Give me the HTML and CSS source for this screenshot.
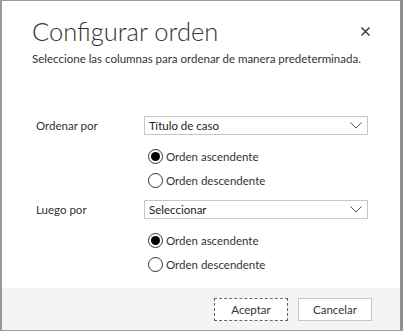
FILE: index.html
```html
<!DOCTYPE html>
<html lang="es">
<head>
<meta charset="utf-8">
<link rel="stylesheet" href="styles.css">
</head>
<body>
<div class="dialog">
  <div class="header">
    <div class="title-row">
      <h1 class="title">Configurar orden</h1>
      <svg class="close" width="9" height="9" viewBox="0 0 9 9"><path d="M0.5 0.5 L8.5 8.5 M8.5 0.5 L0.5 8.5" stroke="#333" stroke-width="1.4" fill="none"/></svg>
    </div>
    <p class="subtitle">Seleccione las columnas para ordenar de manera predeterminada.</p>
  </div>
  <div class="body">
    <div class="group">
      <div class="row">
        <span class="label">Ordenar por</span>
        <div class="select"><span>Título de caso</span>
          <svg class="chev" width="12" height="7" viewBox="0 0 12 7"><path d="M0.5 0.5 L6 6 L11.5 0.5" fill="none" stroke="#555" stroke-width="1"/></svg>
        </div>
      </div>
      <div class="radios">
        <div class="radio"><span class="circle on"></span>Orden ascendente</div>
        <div class="radio"><span class="circle"></span>Orden descendente</div>
      </div>
    </div>
    <div class="group">
      <div class="row">
        <span class="label">Luego por</span>
        <div class="select"><span>Seleccionar</span>
          <svg class="chev" width="12" height="7" viewBox="0 0 12 7"><path d="M0.5 0.5 L6 6 L11.5 0.5" fill="none" stroke="#555" stroke-width="1"/></svg>
        </div>
      </div>
      <div class="radios">
        <div class="radio"><span class="circle on"></span>Orden ascendente</div>
        <div class="radio"><span class="circle"></span>Orden descendente</div>
      </div>
    </div>
  </div>
  <div class="footer">
    <button class="btn primary">Aceptar</button>
    <button class="btn">Cancelar</button>
  </div>
</div>
</body>
</html>
```
FILE: styles.css
```css
html, body {
  margin: 0;
  padding: 0;
  background: #fff;
}
.dialog {
  box-sizing: border-box;
  width: 403px;
  height: 331px;
  border: 1px solid #9a9a9a;
  border-left-width: 2px;
  border-right: 3px solid #8e8e8e;
  display: flex;
  flex-direction: column;
  font-family: "Lato", "Noto Sans", sans-serif;
  color: #333;
  font-size: 11.5px;
}
.header {
  padding: 13px 0 0 30px;
}
.title-row {
  display: flex;
  align-items: center;
  justify-content: space-between;
  padding-right: 30px;
}
.title {
  margin: 0;
  font-family: "Lato", sans-serif;
  font-weight: 300;
  font-size: 25.5px;
  line-height: 34px;
  color: #333;
}
.close {
  display: block;
  margin-top: 1px;
}
.subtitle {
  margin: 3px 0 0;
  font-size: 11.5px;
  line-height: 16px;
  color: #333;
}
.body {
  flex: 1;
  padding: 48px 0 0 34px;
  display: flex;
  flex-direction: column;
  gap: 11px;
}
.row {
  display: flex;
  align-items: center;
  height: 20px;
}
.label {
  width: 108px;
  color: #333;
}
.select {
  box-sizing: border-box;
  width: 224px;
  height: 19px;
  border: 1px solid #c6c6c6;
  display: flex;
  align-items: center;
  justify-content: space-between;
  padding: 0 5px 0 4px;
  color: #222;
}
.chev {
  display: block;
}
.radios {
  margin-left: 112px;
  padding-top: 13px;
  display: flex;
  flex-direction: column;
  gap: 8px;
}
.radio {
  display: flex;
  align-items: center;
  height: 16px;
  color: #333;
}
.circle {
  box-sizing: border-box;
  width: 15px;
  height: 15px;
  border: 1px solid #333;
  border-radius: 50%;
  margin-right: 3px;
  display: flex;
  align-items: center;
  justify-content: center;
}
.circle.on::after {
  content: "";
  width: 9px;
  height: 9px;
  border-radius: 50%;
  background: #000;
}
.footer {
  height: 42px;
  background: #f4f4f4;
  display: flex;
  justify-content: flex-end;
  align-items: center;
  gap: 10px;
  padding-right: 28px;
}
.btn {
  box-sizing: border-box;
  width: 74px;
  height: 23px;
  background: #fff;
  border: 1px solid #c6c6c6;
  font-family: "Lato", "Noto Sans", sans-serif;
  font-size: 11.5px;
  color: #333;
  padding: 0;
}
.btn.primary {
  border: 1px dashed #666;
  outline: none;
}
```
